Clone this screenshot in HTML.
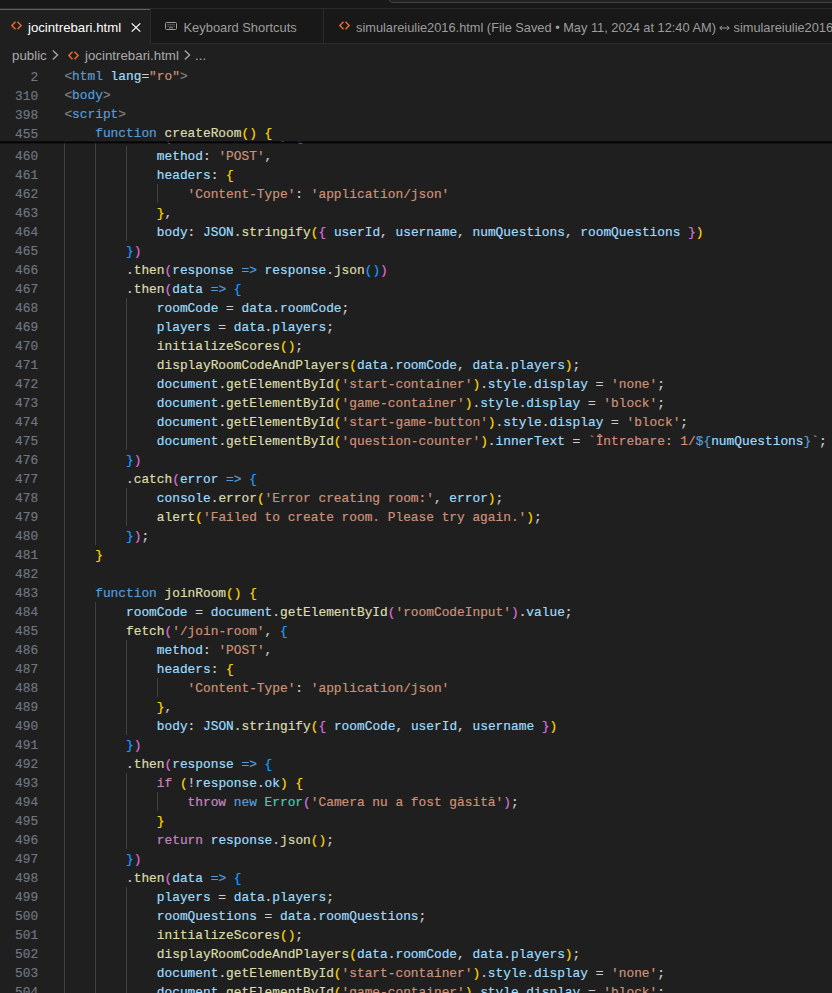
<!DOCTYPE html>
<html><head><meta charset="utf-8">
<style>
html,body{margin:0;padding:0;}
body{width:832px;height:993px;overflow:hidden;background:#1f1f1f;position:relative;font-family:"Liberation Sans",sans-serif;}
#top{position:absolute;left:0;top:0;width:832px;height:8px;background:#181818;overflow:hidden;}
#top .cc{position:absolute;left:388px;top:-21px;width:600px;height:22px;border:1px solid #434343;border-radius:5px;background:#222222;}
#tabs{position:absolute;left:0;top:8px;width:832px;height:36px;background:#181818;border-top:1px solid #2b2b2b;box-sizing:border-box;}
#tabs:after{content:"";position:absolute;left:0;right:0;bottom:0;height:1px;background:#2b2b2b;}
.tab{position:absolute;top:0;height:35px;box-sizing:border-box;white-space:nowrap;font-size:13px;color:#9d9d9d;}
.tab.active{background:#1f1f1f;color:#ffffff;border-top:1px solid #0078d4;z-index:2;height:35px;}
.tab .bd{position:absolute;right:0;top:0;width:1px;height:35px;background:#2b2b2b;}
.tab .tx{position:absolute;top:10px;line-height:16px;font-size:13.2px;}
svg{position:absolute;overflow:visible;}
#crumbs{position:absolute;left:0;top:44px;width:832px;height:22px;font-size:13px;color:#a9a9a9;white-space:nowrap;}
#crumbs .tx{position:absolute;top:4px;line-height:16px;font-size:13.3px;}
.ln{position:absolute;left:0;text-align:right;}
.code{position:absolute;left:0;top:0;width:832px;height:993px;font-family:"Liberation Mono",monospace;-webkit-text-stroke:0.2px currentColor;font-size:12.83px;letter-spacing:0.0px;line-height:19px;}
.ln,.cd{height:19px;white-space:pre;}
.ln{color:#6e7681;width:38.1px;}
.cd{position:absolute;left:64.4px;}
#editor{position:absolute;left:0;top:0;width:832px;height:993px;overflow:hidden;}
#guides i{position:absolute;width:1px;height:19px;background:#404040;}
#sticky{position:absolute;left:0;top:65px;width:832px;height:76px;background:#1f1f1f;z-index:5;}
#sticky .code{height:76px;}
#shadow{position:absolute;left:0;top:141px;width:832px;height:4px;z-index:5;background:linear-gradient(rgba(0,0,0,0.55) 0,rgba(0,0,0,0.55) 1px,#000 1px,#000 2px,rgba(0,0,0,0.3) 2px,rgba(0,0,0,0.3) 3px,rgba(0,0,0,0) 3px);}
.t{color:#808080}.g{color:#569cd6}.v{color:#9cdcfe}.k{color:#569cd6}.f{color:#dcdcaa}.s{color:#ce9178}.c{color:#c586c0}.l{color:#4ec9b0}.p{color:#cccccc}
.b1{color:#ffd700}.b2{color:#da70d6}.b3{color:#179fff}
</style></head><body>
<div id="top"><div class="cc"></div></div>
<div id="tabs">
  <div class="tab active" style="left:0;width:150px;">
    <svg style="left:11px;top:11.4px" width="11" height="9" viewBox="0 0 11 9"><path d="M4.5 0.7 L0.9 4.5 L4.5 8.3 M6.5 0.7 L10.1 4.5 L6.5 8.3" fill="none" stroke="#e8682e" stroke-width="1.5"/></svg>
    <span class="tx" style="left:28px">jocintrebari.html</span>
    <svg style="left:131px;top:13px" width="10" height="9" viewBox="0 0 10 9"><path d="M0.7 0.4 L9.3 8.6 M9.3 0.4 L0.7 8.6" fill="none" stroke="#ffffff" stroke-width="1.25"/></svg>
    <div class="bd" style="right:-1px;top:-1px;height:35px"></div>
  </div>
  <div class="tab" style="left:151px;width:173px;">
    <svg style="left:14px;top:13px" width="12" height="8" viewBox="0 0 12 8"><rect x="0.5" y="0.5" width="11" height="7" rx="1" fill="none" stroke="#9d9d9d" stroke-width="1"/><path d="M2.5 2.6 H10 M2.5 4.2 H10" stroke="#8a8a8a" stroke-width="0.9" stroke-dasharray="1.1 0.9"/><path d="M4 5.8 H8" stroke="#9d9d9d" stroke-width="0.9"/></svg>
    <span class="tx" style="left:32.5px;top:11px;font-size:12.9px">Keyboard Shortcuts</span>
    <div class="bd"></div>
  </div>
  <div class="tab" style="left:324px;width:600px;">
    <svg style="left:15px;top:12.4px" width="11" height="9" viewBox="0 0 11 9"><path d="M4.5 0.7 L0.9 4.5 L4.5 8.3 M6.5 0.7 L10.1 4.5 L6.5 8.3" fill="none" stroke="#e8682e" stroke-width="1.5"/></svg>
    <span class="tx" style="left:32px;top:11px;font-size:12.8px">simulareiulie2016.html (File Saved • May 11, 2024 at 12:40 AM)</span><svg style="left:395px;top:15px" width="11" height="8" viewBox="0 0 11 8"><path d="M0.8 4 H10.2 M3 1.8 L0.8 4 L3 6.2 M8 1.8 L10.2 4 L8 6.2" fill="none" stroke="#9d9d9d" stroke-width="1"/></svg><span class="tx" style="left:409.5px;top:11px;font-size:12.8px">simulareiulie2016.html</span>
  </div>
</div>
<div id="crumbs">
  <span class="tx" style="left:12px">public</span>
  <svg style="left:52px;top:6px" width="7" height="10" viewBox="0 0 7 10"><path d="M0.8 0.6 L5.6 5 L0.8 9.4" fill="none" stroke="#a9a9a9" stroke-width="1.3"/></svg>
  <svg style="left:68px;top:7px" width="11" height="9" viewBox="0 0 11 9"><path d="M4.5 0.7 L0.9 4.5 L4.5 8.3 M6.5 0.7 L10.1 4.5 L6.5 8.3" fill="none" stroke="#e8682e" stroke-width="1.5"/></svg>
  <span class="tx" style="left:85px">jocintrebari.html</span>
  <svg style="left:184px;top:6px" width="7" height="10" viewBox="0 0 7 10"><path d="M0.8 0.6 L5.6 5 L0.8 9.4" fill="none" stroke="#a9a9a9" stroke-width="1.3"/></svg>
  <span class="tx" style="left:195px">...</span>
</div>
<div id="editor">
<div id="guides">
<i style="left:64px;top:127.00px"></i>
<i style="left:95px;top:127.00px"></i>
<i style="left:64px;top:146.00px"></i>
<i style="left:95px;top:146.00px"></i>
<i style="left:126px;top:146.00px"></i>
<i style="left:64px;top:165.00px"></i>
<i style="left:95px;top:165.00px"></i>
<i style="left:126px;top:165.00px"></i>
<i style="left:64px;top:184.00px"></i>
<i style="left:95px;top:184.00px"></i>
<i style="left:126px;top:184.00px"></i>
<i style="left:157px;top:184.00px"></i>
<i style="left:64px;top:203.00px"></i>
<i style="left:95px;top:203.00px"></i>
<i style="left:126px;top:203.00px"></i>
<i style="left:64px;top:222.00px"></i>
<i style="left:95px;top:222.00px"></i>
<i style="left:126px;top:222.00px"></i>
<i style="left:64px;top:241.00px"></i>
<i style="left:95px;top:241.00px"></i>
<i style="left:64px;top:260.00px"></i>
<i style="left:95px;top:260.00px"></i>
<i style="left:64px;top:279.00px"></i>
<i style="left:95px;top:279.00px"></i>
<i style="left:64px;top:298.00px"></i>
<i style="left:95px;top:298.00px"></i>
<i style="left:126px;top:298.00px"></i>
<i style="left:64px;top:317.00px"></i>
<i style="left:95px;top:317.00px"></i>
<i style="left:126px;top:317.00px"></i>
<i style="left:64px;top:336.00px"></i>
<i style="left:95px;top:336.00px"></i>
<i style="left:126px;top:336.00px"></i>
<i style="left:64px;top:355.00px"></i>
<i style="left:95px;top:355.00px"></i>
<i style="left:126px;top:355.00px"></i>
<i style="left:64px;top:374.00px"></i>
<i style="left:95px;top:374.00px"></i>
<i style="left:126px;top:374.00px"></i>
<i style="left:64px;top:393.00px"></i>
<i style="left:95px;top:393.00px"></i>
<i style="left:126px;top:393.00px"></i>
<i style="left:64px;top:412.00px"></i>
<i style="left:95px;top:412.00px"></i>
<i style="left:126px;top:412.00px"></i>
<i style="left:64px;top:431.00px"></i>
<i style="left:95px;top:431.00px"></i>
<i style="left:126px;top:431.00px"></i>
<i style="left:64px;top:450.00px"></i>
<i style="left:95px;top:450.00px"></i>
<i style="left:64px;top:469.00px"></i>
<i style="left:95px;top:469.00px"></i>
<i style="left:64px;top:488.00px"></i>
<i style="left:95px;top:488.00px"></i>
<i style="left:126px;top:488.00px"></i>
<i style="left:64px;top:507.00px"></i>
<i style="left:95px;top:507.00px"></i>
<i style="left:126px;top:507.00px"></i>
<i style="left:64px;top:526.00px"></i>
<i style="left:95px;top:526.00px"></i>
<i style="left:64px;top:545.00px"></i>
<i style="left:64px;top:564.00px"></i>
<i style="left:64px;top:583.00px"></i>
<i style="left:64px;top:602.00px"></i>
<i style="left:95px;top:602.00px"></i>
<i style="left:64px;top:621.00px"></i>
<i style="left:95px;top:621.00px"></i>
<i style="left:64px;top:640.00px"></i>
<i style="left:95px;top:640.00px"></i>
<i style="left:126px;top:640.00px"></i>
<i style="left:64px;top:659.00px"></i>
<i style="left:95px;top:659.00px"></i>
<i style="left:126px;top:659.00px"></i>
<i style="left:64px;top:678.00px"></i>
<i style="left:95px;top:678.00px"></i>
<i style="left:126px;top:678.00px"></i>
<i style="left:157px;top:678.00px"></i>
<i style="left:64px;top:697.00px"></i>
<i style="left:95px;top:697.00px"></i>
<i style="left:126px;top:697.00px"></i>
<i style="left:64px;top:716.00px"></i>
<i style="left:95px;top:716.00px"></i>
<i style="left:126px;top:716.00px"></i>
<i style="left:64px;top:735.00px"></i>
<i style="left:95px;top:735.00px"></i>
<i style="left:64px;top:754.00px"></i>
<i style="left:95px;top:754.00px"></i>
<i style="left:64px;top:773.00px"></i>
<i style="left:95px;top:773.00px"></i>
<i style="left:126px;top:773.00px"></i>
<i style="left:64px;top:792.00px"></i>
<i style="left:95px;top:792.00px"></i>
<i style="left:126px;top:792.00px"></i>
<i style="left:157px;top:792.00px"></i>
<i style="left:64px;top:811.00px"></i>
<i style="left:95px;top:811.00px"></i>
<i style="left:126px;top:811.00px"></i>
<i style="left:64px;top:830.00px"></i>
<i style="left:95px;top:830.00px"></i>
<i style="left:126px;top:830.00px"></i>
<i style="left:64px;top:849.00px"></i>
<i style="left:95px;top:849.00px"></i>
<i style="left:64px;top:868.00px"></i>
<i style="left:95px;top:868.00px"></i>
<i style="left:64px;top:887.00px"></i>
<i style="left:95px;top:887.00px"></i>
<i style="left:126px;top:887.00px"></i>
<i style="left:64px;top:906.00px"></i>
<i style="left:95px;top:906.00px"></i>
<i style="left:126px;top:906.00px"></i>
<i style="left:64px;top:925.00px"></i>
<i style="left:95px;top:925.00px"></i>
<i style="left:126px;top:925.00px"></i>
<i style="left:64px;top:944.00px"></i>
<i style="left:95px;top:944.00px"></i>
<i style="left:126px;top:944.00px"></i>
<i style="left:64px;top:963.00px"></i>
<i style="left:95px;top:963.00px"></i>
<i style="left:126px;top:963.00px"></i>
<i style="left:64px;top:982.00px"></i>
<i style="left:95px;top:982.00px"></i>
<i style="left:126px;top:982.00px"></i>
</div>
<div class="code">
<div class="ln" style="top:127.90px">459</div><div class="cd" style="top:127.90px">        <span class="f">fetch</span><span class="b2">(</span><span class="s">&#x27;/create-room&#x27;</span><span class="p">, </span><span class="b3">{</span></div>
<div class="ln" style="top:146.90px">460</div><div class="cd" style="top:146.90px">            <span class="v">method</span><span class="p">: </span><span class="s">&#x27;POST&#x27;</span><span class="p">,</span></div>
<div class="ln" style="top:165.90px">461</div><div class="cd" style="top:165.90px">            <span class="v">headers</span><span class="p">: </span><span class="b1">{</span></div>
<div class="ln" style="top:184.90px">462</div><div class="cd" style="top:184.90px">                <span class="s">&#x27;Content-Type&#x27;</span><span class="p">: </span><span class="s">&#x27;application/json&#x27;</span></div>
<div class="ln" style="top:203.90px">463</div><div class="cd" style="top:203.90px">            <span class="b1">}</span><span class="p">,</span></div>
<div class="ln" style="top:222.90px">464</div><div class="cd" style="top:222.90px">            <span class="v">body</span><span class="p">: </span><span class="v">JSON</span><span class="p">.</span><span class="f">stringify</span><span class="b1">(</span><span class="b2">{</span><span class="p"> </span><span class="v">userId</span><span class="p">, </span><span class="v">username</span><span class="p">, </span><span class="v">numQuestions</span><span class="p">, </span><span class="v">roomQuestions</span><span class="p"> </span><span class="b2">}</span><span class="b1">)</span></div>
<div class="ln" style="top:241.90px">465</div><div class="cd" style="top:241.90px">        <span class="b3">}</span><span class="b2">)</span></div>
<div class="ln" style="top:260.90px">466</div><div class="cd" style="top:260.90px">        <span class="p">.</span><span class="f">then</span><span class="b2">(</span><span class="v">response</span><span class="p"> </span><span class="k">=&gt;</span><span class="p"> </span><span class="v">response</span><span class="p">.</span><span class="f">json</span><span class="b3">(</span><span class="b3">)</span><span class="b2">)</span></div>
<div class="ln" style="top:279.90px">467</div><div class="cd" style="top:279.90px">        <span class="p">.</span><span class="f">then</span><span class="b2">(</span><span class="v">data</span><span class="p"> </span><span class="k">=&gt;</span><span class="p"> </span><span class="b3">{</span></div>
<div class="ln" style="top:298.90px">468</div><div class="cd" style="top:298.90px">            <span class="v">roomCode</span><span class="p"> = </span><span class="v">data</span><span class="p">.</span><span class="v">roomCode</span><span class="p">;</span></div>
<div class="ln" style="top:317.90px">469</div><div class="cd" style="top:317.90px">            <span class="v">players</span><span class="p"> = </span><span class="v">data</span><span class="p">.</span><span class="v">players</span><span class="p">;</span></div>
<div class="ln" style="top:336.90px">470</div><div class="cd" style="top:336.90px">            <span class="f">initializeScores</span><span class="b1">(</span><span class="b1">)</span><span class="p">;</span></div>
<div class="ln" style="top:355.90px">471</div><div class="cd" style="top:355.90px">            <span class="f">displayRoomCodeAndPlayers</span><span class="b1">(</span><span class="v">data</span><span class="p">.</span><span class="v">roomCode</span><span class="p">, </span><span class="v">data</span><span class="p">.</span><span class="v">players</span><span class="b1">)</span><span class="p">;</span></div>
<div class="ln" style="top:374.90px">472</div><div class="cd" style="top:374.90px">            <span class="v">document</span><span class="p">.</span><span class="f">getElementById</span><span class="b1">(</span><span class="s">&#x27;start-container&#x27;</span><span class="b1">)</span><span class="p">.</span><span class="v">style</span><span class="p">.</span><span class="v">display</span><span class="p"> = </span><span class="s">&#x27;none&#x27;</span><span class="p">;</span></div>
<div class="ln" style="top:393.90px">473</div><div class="cd" style="top:393.90px">            <span class="v">document</span><span class="p">.</span><span class="f">getElementById</span><span class="b1">(</span><span class="s">&#x27;game-container&#x27;</span><span class="b1">)</span><span class="p">.</span><span class="v">style</span><span class="p">.</span><span class="v">display</span><span class="p"> = </span><span class="s">&#x27;block&#x27;</span><span class="p">;</span></div>
<div class="ln" style="top:412.90px">474</div><div class="cd" style="top:412.90px">            <span class="v">document</span><span class="p">.</span><span class="f">getElementById</span><span class="b1">(</span><span class="s">&#x27;start-game-button&#x27;</span><span class="b1">)</span><span class="p">.</span><span class="v">style</span><span class="p">.</span><span class="v">display</span><span class="p"> = </span><span class="s">&#x27;block&#x27;</span><span class="p">;</span></div>
<div class="ln" style="top:431.90px">475</div><div class="cd" style="top:431.90px">            <span class="v">document</span><span class="p">.</span><span class="f">getElementById</span><span class="b1">(</span><span class="s">&#x27;question-counter&#x27;</span><span class="b1">)</span><span class="p">.</span><span class="v">innerText</span><span class="p"> = </span><span class="s">`Întrebare: 1/</span><span class="k">${</span><span class="v">numQuestions</span><span class="k">}</span><span class="s">`</span><span class="p">;</span></div>
<div class="ln" style="top:450.90px">476</div><div class="cd" style="top:450.90px">        <span class="b3">}</span><span class="b2">)</span></div>
<div class="ln" style="top:469.90px">477</div><div class="cd" style="top:469.90px">        <span class="p">.</span><span class="f">catch</span><span class="b2">(</span><span class="v">error</span><span class="p"> </span><span class="k">=&gt;</span><span class="p"> </span><span class="b3">{</span></div>
<div class="ln" style="top:488.90px">478</div><div class="cd" style="top:488.90px">            <span class="v">console</span><span class="p">.</span><span class="f">error</span><span class="b1">(</span><span class="s">&#x27;Error creating room:&#x27;</span><span class="p">, </span><span class="v">error</span><span class="b1">)</span><span class="p">;</span></div>
<div class="ln" style="top:507.90px">479</div><div class="cd" style="top:507.90px">            <span class="f">alert</span><span class="b1">(</span><span class="s">&#x27;Failed to create room. Please try again.&#x27;</span><span class="b1">)</span><span class="p">;</span></div>
<div class="ln" style="top:526.90px">480</div><div class="cd" style="top:526.90px">        <span class="b3">}</span><span class="b2">)</span><span class="p">;</span></div>
<div class="ln" style="top:545.90px">481</div><div class="cd" style="top:545.90px">    <span class="b1">}</span></div>
<div class="ln" style="top:564.90px">482</div><div class="cd" style="top:564.90px"></div>
<div class="ln" style="top:583.90px">483</div><div class="cd" style="top:583.90px">    <span class="k">function</span><span class="p"> </span><span class="f">joinRoom</span><span class="b1">(</span><span class="b1">)</span><span class="p"> </span><span class="b1">{</span></div>
<div class="ln" style="top:602.90px">484</div><div class="cd" style="top:602.90px">        <span class="v">roomCode</span><span class="p"> = </span><span class="v">document</span><span class="p">.</span><span class="f">getElementById</span><span class="b2">(</span><span class="s">&#x27;roomCodeInput&#x27;</span><span class="b2">)</span><span class="p">.</span><span class="v">value</span><span class="p">;</span></div>
<div class="ln" style="top:621.90px">485</div><div class="cd" style="top:621.90px">        <span class="f">fetch</span><span class="b2">(</span><span class="s">&#x27;/join-room&#x27;</span><span class="p">, </span><span class="b3">{</span></div>
<div class="ln" style="top:640.90px">486</div><div class="cd" style="top:640.90px">            <span class="v">method</span><span class="p">: </span><span class="s">&#x27;POST&#x27;</span><span class="p">,</span></div>
<div class="ln" style="top:659.90px">487</div><div class="cd" style="top:659.90px">            <span class="v">headers</span><span class="p">: </span><span class="b1">{</span></div>
<div class="ln" style="top:678.90px">488</div><div class="cd" style="top:678.90px">                <span class="s">&#x27;Content-Type&#x27;</span><span class="p">: </span><span class="s">&#x27;application/json&#x27;</span></div>
<div class="ln" style="top:697.90px">489</div><div class="cd" style="top:697.90px">            <span class="b1">}</span><span class="p">,</span></div>
<div class="ln" style="top:716.90px">490</div><div class="cd" style="top:716.90px">            <span class="v">body</span><span class="p">: </span><span class="v">JSON</span><span class="p">.</span><span class="f">stringify</span><span class="b1">(</span><span class="b2">{</span><span class="p"> </span><span class="v">roomCode</span><span class="p">, </span><span class="v">userId</span><span class="p">, </span><span class="v">username</span><span class="p"> </span><span class="b2">}</span><span class="b1">)</span></div>
<div class="ln" style="top:735.90px">491</div><div class="cd" style="top:735.90px">        <span class="b3">}</span><span class="b2">)</span></div>
<div class="ln" style="top:754.90px">492</div><div class="cd" style="top:754.90px">        <span class="p">.</span><span class="f">then</span><span class="b2">(</span><span class="v">response</span><span class="p"> </span><span class="k">=&gt;</span><span class="p"> </span><span class="b3">{</span></div>
<div class="ln" style="top:773.90px">493</div><div class="cd" style="top:773.90px">            <span class="c">if</span><span class="p"> </span><span class="b1">(</span><span class="p">!</span><span class="v">response</span><span class="p">.</span><span class="v">ok</span><span class="b1">)</span><span class="p"> </span><span class="b1">{</span></div>
<div class="ln" style="top:792.90px">494</div><div class="cd" style="top:792.90px">                <span class="c">throw</span><span class="p"> </span><span class="k">new</span><span class="p"> </span><span class="l">Error</span><span class="b2">(</span><span class="s">&#x27;Camera nu a fost găsită&#x27;</span><span class="b2">)</span><span class="p">;</span></div>
<div class="ln" style="top:811.90px">495</div><div class="cd" style="top:811.90px">            <span class="b1">}</span></div>
<div class="ln" style="top:830.90px">496</div><div class="cd" style="top:830.90px">            <span class="c">return</span><span class="p"> </span><span class="v">response</span><span class="p">.</span><span class="f">json</span><span class="b1">(</span><span class="b1">)</span><span class="p">;</span></div>
<div class="ln" style="top:849.90px">497</div><div class="cd" style="top:849.90px">        <span class="b3">}</span><span class="b2">)</span></div>
<div class="ln" style="top:868.90px">498</div><div class="cd" style="top:868.90px">        <span class="p">.</span><span class="f">then</span><span class="b2">(</span><span class="v">data</span><span class="p"> </span><span class="k">=&gt;</span><span class="p"> </span><span class="b3">{</span></div>
<div class="ln" style="top:887.90px">499</div><div class="cd" style="top:887.90px">            <span class="v">players</span><span class="p"> = </span><span class="v">data</span><span class="p">.</span><span class="v">players</span><span class="p">;</span></div>
<div class="ln" style="top:906.90px">500</div><div class="cd" style="top:906.90px">            <span class="v">roomQuestions</span><span class="p"> = </span><span class="v">data</span><span class="p">.</span><span class="v">roomQuestions</span><span class="p">;</span></div>
<div class="ln" style="top:925.90px">501</div><div class="cd" style="top:925.90px">            <span class="f">initializeScores</span><span class="b1">(</span><span class="b1">)</span><span class="p">;</span></div>
<div class="ln" style="top:944.90px">502</div><div class="cd" style="top:944.90px">            <span class="f">displayRoomCodeAndPlayers</span><span class="b1">(</span><span class="v">data</span><span class="p">.</span><span class="v">roomCode</span><span class="p">, </span><span class="v">data</span><span class="p">.</span><span class="v">players</span><span class="b1">)</span><span class="p">;</span></div>
<div class="ln" style="top:963.90px">503</div><div class="cd" style="top:963.90px">            <span class="v">document</span><span class="p">.</span><span class="f">getElementById</span><span class="b1">(</span><span class="s">&#x27;start-container&#x27;</span><span class="b1">)</span><span class="p">.</span><span class="v">style</span><span class="p">.</span><span class="v">display</span><span class="p"> = </span><span class="s">&#x27;none&#x27;</span><span class="p">;</span></div>
<div class="ln" style="top:982.90px">504</div><div class="cd" style="top:982.90px">            <span class="v">document</span><span class="p">.</span><span class="f">getElementById</span><span class="b1">(</span><span class="s">&#x27;game-container&#x27;</span><span class="b1">)</span><span class="p">.</span><span class="v">style</span><span class="p">.</span><span class="v">display</span><span class="p"> = </span><span class="s">&#x27;block&#x27;</span><span class="p">;</span></div>
</div>
<div id="sticky"><div class="code">
<div class="ln" style="top:2.80px">2</div><div class="cd" style="top:2.10px"><span class="t">&lt;</span><span class="g">html</span><span class="p"> </span><span class="v">lang</span><span class="p">=</span><span class="s">&quot;ro&quot;</span><span class="t">&gt;</span></div>
<div class="ln" style="top:21.80px">310</div><div class="cd" style="top:21.10px"><span class="t">&lt;</span><span class="g">body</span><span class="t">&gt;</span></div>
<div class="ln" style="top:40.80px">398</div><div class="cd" style="top:40.10px"><span class="t">&lt;</span><span class="g">script</span><span class="t">&gt;</span></div>
<div class="ln" style="top:59.80px">455</div><div class="cd" style="top:59.10px">    <span class="k">function</span><span class="p"> </span><span class="f">createRoom</span><span class="b1">(</span><span class="b1">)</span><span class="p"> </span><span class="b1">{</span></div>
</div></div>
<div id="shadow"></div>
</div>
</body></html>
